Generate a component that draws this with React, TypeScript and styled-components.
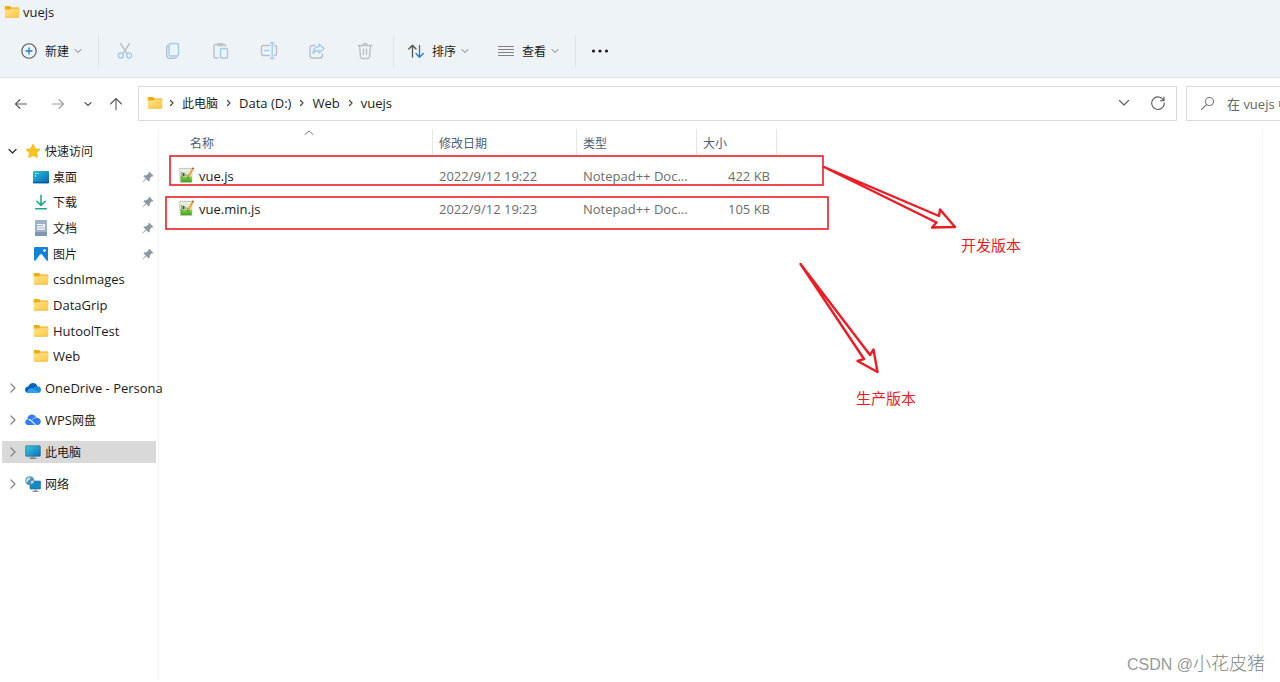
import React from "react";
import styled, { createGlobalStyle, css } from "styled-components";

const GlobalStyle = createGlobalStyle`
  *, *::before, *::after { box-sizing: border-box; }
  body {
    margin: 0;
    background: #fff;
    color: #1b1b1b;
    font-family: "Open Sans", "Noto Sans CJK SC", sans-serif;
    font-size: 13px;
    line-height: 20px;
  }
  button, input { font: inherit; color: inherit; }
  ul, ol { list-style: none; margin: 0; padding: 0; }
  svg { display: block; flex: none; }
`;

const Window = styled.div`
  position: relative;
  display: flex;
  flex-direction: column;
  min-height: 100vh;
  overflow: hidden;
`;

/* Chinese labels are set one pixel smaller than Latin ones. */
const Han = styled.span`
  font-family: "Noto Sans CJK SC", sans-serif;
  font-size: 12px;
`;

const Header = styled.header`
  background: #eef3f8;
  border-bottom: 1px solid #dfe3e6;
`;

const TitleBar = styled.h1`
  display: flex;
  align-items: center;
  gap: 3px;
  height: 24px;
  margin: 0;
  padding-left: 4px;
  font-size: 13px;
  font-weight: 400;
`;

const Toolbar = styled.div`
  display: flex;
  align-items: center;
  height: 53px;
  padding-left: 13px;
`;

const PlainButton = styled.button`
  display: flex;
  align-items: center;
  justify-content: center;
  padding: 0;
  border: 0;
  background: none;
`;

const MenuButton = styled(PlainButton)`
  gap: 8px;
  height: 32px;
  padding: 0 12px 0 8px;

  svg:last-child { margin-left: -3px; }
`;

const ToolButton = styled(PlainButton)`
  width: 48px;
  height: 32px;
`;

const MoreButton = styled(ToolButton)`
  width: 44px;
`;

const Divider = styled.span`
  width: 1px;
  height: 32px;
  margin: 0 2px 0 4px;
  background: #dfe4e9;
`;

const SortGroup = styled.div`
  display: flex;
  gap: 9px;
  padding-left: 4px;
`;

const AddressRow = styled.div`
  display: flex;
  align-items: center;
  padding: 8px 0 8px 8px;
`;

const NavButton = styled(PlainButton)<{ $w: number }>`
  width: ${(p) => p.$w}px;
  height: 32px;
`;

const AddressBox = styled.div`
  display: flex;
  flex: 1;
  align-items: center;
  height: 35px;
  margin-right: 9px;
  padding: 0 0 2px 8px;
  border: 1px solid #d9d9d9;
`;

const Crumbs = styled.ol`
  display: flex;
  flex: 1;
  align-items: center;

  li { display: flex; align-items: center; white-space: nowrap; }
  li svg:last-child { margin: 0 7px 0 8px; }
  li:first-child svg:last-child { margin-left: 6px; }
`;

const Crumb = styled.a`
  color: inherit;
  text-decoration: none;
`;

const SearchBox = styled.label`
  display: flex;
  flex: 0 0 94px;
  align-items: center;
  gap: 12px;
  height: 35px;
  padding-left: 13px;
  border: 1px solid #d9d9d9;
  border-right: 0;
  overflow: hidden;
`;

const SearchInput = styled.input`
  flex: 1;
  min-width: 0;
  padding: 0;
  border: 0;
  outline: 0;
  background: none;

  &::placeholder { color: #666; opacity: 1; }
`;

const Body = styled.div`
  display: flex;
  flex: 1;
  padding-bottom: 2px;
`;

const Sidebar = styled.nav`
  flex: 0 0 159px;
  min-width: 0;
  padding: 11px 2px 0;
  border-right: 1px solid #f3f3f3;
`;

const RootList = styled.ul`
  display: flex;
  flex-direction: column;
  gap: 10px;
`;

const rowLayout = css`
  display: flex;
  align-items: center;
  gap: 4px;
  color: inherit;
  text-decoration: none;
  white-space: nowrap;
`;

const RootLink = styled.a<{ $selected?: boolean }>`
  ${rowLayout}
  height: 22px;
  padding-left: 6px;
  border-radius: 1px;
  background: ${(p) => (p.$selected ? "#d9d9d9" : "none")};

  svg:first-child { margin-right: 4px; }
`;

const ChildList = styled.ul`
  display: grid;
  grid-auto-rows: 1fr;
  height: 205px;
  margin: 2px 0 -2px;
`;

const ChildLink = styled.a`
  ${rowLayout}
  height: 100%;
  padding-left: 31px;
`;

const PinSlot = styled.span`
  margin: 0 2px 0 auto;
`;

const Content = styled.main`
  flex: 1;
  min-width: 0;
  margin-right: 17px;
  border-right: 1px solid #f5f5f5;
`;

const FileTable = styled.table`
  width: 618px;
  table-layout: fixed;
  border-collapse: separate;
  border-spacing: 0;
`;

const HeadCell = styled.th<{ $w: number; $pad: number }>`
  position: relative;
  width: ${(p) => p.$w}px;
  height: 26px;
  padding: 2px 0 0 ${(p) => p.$pad}px;
  border-right: 1px solid #e5e5e5;
  color: #4c607a;
  font-weight: 400;
  text-align: left;
`;

const SortMark = styled.span`
  position: absolute;
  top: 1px;
  left: 50%;
  padding-left: 8px;
`;

const HeadGap = styled.tr`
  height: 5px;
`;

const Cell = styled.td<{ $right?: boolean }>`
  height: 33px;
  padding: 0 7px 2px 6px;
  color: #6d6d6d;
  text-align: ${(p) => (p.$right ? "right" : "left")};
  white-space: nowrap;
`;

const NameCell = styled(Cell)`
  padding-left: 19px;
  color: #1b1b1b;
`;

const FileName = styled.span`
  display: flex;
  align-items: center;
  gap: 4px;
`;

const Marks = styled.svg`
  position: absolute;
  top: 0;
  left: 0;
  pointer-events: none;
`;

const Note = styled.span<{ $x: number; $y: number }>`
  position: absolute;
  left: ${(p) => p.$x}px;
  top: ${(p) => p.$y}px;
  color: #ed1c24;
  font-family: "Noto Sans CJK SC", sans-serif;
  font-size: 15px;
`;

const Watermark = styled.span`
  position: absolute;
  right: 15px;
  bottom: 5px;
  color: #868686;
  font-family: "Noto Sans CJK SC", sans-serif;
  font-weight: 300;
  font-size: 18px;
  line-height: 24px;
`;

const WatermarkSite = styled.span`
  color: #999;
  font-family: "Liberation Sans", sans-serif;
  font-size: 16px;
`;

type LineProps = { d: string; size?: number; w?: number; h?: number; color?: string; sw?: number };

const Line = ({ d, size = 16, w, h, color = "#5c5c5c", sw = 1.1 }: LineProps) => (
  <svg width={w ?? size} height={h ?? size} fill="none" stroke={color} strokeWidth={sw} strokeLinecap="round" strokeLinejoin="round" aria-hidden="true">
    <path d={d} />
  </svg>
);

const ChevronDown = () => <Line w={8} h={6} d="M1 1.500 4 4.500 7 1.500" color="#777" sw={1} />;
const ChevronRight = () => <Line w={6} h={8} d="M1.500 1.500 4 4 1.500 6.500" color="#444" sw={1.2} />;
const TreeClosed = () => <Line w={9} h={12} d="M3 2 7 6 3 10" color="#858585" sw={1.3} />;
const TreeOpen = () => <Line w={9} h={12} d="M1 4.500 4.500 8 8 4.500" color="#333" sw={1.3} />;

const Folder = () => (
  <svg width="16" height="14" viewBox="0 0 16 14" aria-hidden="true">
    <defs>
      <linearGradient id="folder" x1="0" y1="0" x2="1" y2="1">
        <stop offset="0" stopColor="#ffe394" />
        <stop offset="1" stopColor="#fdc73c" />
      </linearGradient>
    </defs>
    <path d="M.8 2q0-1 1-1h3.800q.5 0 .9.4L7.500 2.500H14.500q.7 0 .7.7V6H.8Z" fill="#f2ab0e" />
    <path d="M.8 4.500h4.800q.5 0 .9-.4l.7-.6h7.300q.7 0 .7.7v7.600q0 .8-.8.8H1.600q-.8 0-.8-.8Z" fill="url(#folder)" />
    <path d="M1.300 12.300h13.400" stroke="#e9ad2c" strokeWidth=".6" />
  </svg>
);

const Star = () => (
  <svg width="16" height="16" aria-hidden="true">
    <path d="M8 1.300 10.100 5.700 15 6.400 11.500 9.800 12.300 14.600 8 12.300 3.700 14.600 4.500 9.800 1 6.400 5.900 5.700Z" fill="#fcc419" stroke="#f5b50a" strokeWidth=".8" strokeLinejoin="round" />
  </svg>
);

const Desktop = () => (
  <svg width="16" height="14" aria-hidden="true">
    <defs>
      <linearGradient id="desk" x1="0" y1="0" x2="1" y2="1">
        <stop offset="0" stopColor="#2bc3d2" />
        <stop offset="1" stopColor="#0b62b8" />
      </linearGradient>
    </defs>
    <rect y="1" width="16" height="12.500" rx="1" fill="url(#desk)" />
    <path d="M2 3.500h1.200M2 6h1.200M4.500 3.500h1" stroke="#d9fbff" strokeWidth="1.200" />
    <path d="M0 12.300h16" stroke="#0a5ca8" strokeWidth="1.400" />
  </svg>
);

const Download = () => (
  <svg width="16" height="16" fill="none" stroke="#1aa884" strokeWidth="1.500" strokeLinecap="round" strokeLinejoin="round" aria-hidden="true">
    <path d="M8 1.200v10M3.800 7.200 8 11.400l4.200-4.200M2.700 14.800h10.600" />
  </svg>
);

const Document = () => (
  <svg width="16" height="16" aria-hidden="true">
    <rect x="2" y="0" width="12" height="16" rx="1" fill="#9db2ca" />
    <path d="M2 12h12v3q0 1-1 1H3q-1 0-1-1Z" fill="#7d97b5" />
    <path d="M4 4.500h5M4 6.800h8M4 9.100h8" stroke="#fff" strokeWidth="1.200" />
    <rect x="9.500" y="4" width="2.500" height="2.800" fill="#e9f1f8" />
  </svg>
);

const Picture = () => (
  <svg width="16" height="14" aria-hidden="true">
    <rect x="1" y="0" width="14" height="14" rx="1" fill="#1583d4" />
    <path d="M2 14 7 7.500q1-1 2 0L14 14Z" fill="#f4faff" />
    <circle cx="11.500" cy="3.500" r="1.300" fill="#fff" />
  </svg>
);

const Pin = () => (
  <svg width="12" height="12" aria-hidden="true">
    <path d="M7.300.9 11.100 4.700 10.200 5.500 9.600 5.300 7.700 7.300 7.600 9.400 6.700 10.200 4.300 7.900 1 11.100.8 10.900 3.900 7.500 1.700 5.300 2.600 4.400 4.700 4.300 6.700 2.400 6.500 1.700Z" fill="#8b98a3" stroke="#8b98a3" strokeWidth=".4" />
  </svg>
);

const OneDrive = () => (
  <svg width="16" height="12" aria-hidden="true">
    <path d="M3.400 11Q0 10.700 0 7.700 .2 5 3.200 4.600 4.600 1 8 1q3.200.1 4.400 3.200L9 9Z" fill="#0b63b5" />
    <path d="M12.300 4.200Q15.700 4.300 16 7.500q-.1 3.300-3.400 3.500L7.500 7.200Q9.500 4.200 12.300 4.200Z" fill="#1a86dc" />
    <path d="M2.200 10.500Q3 6.300 6.200 6.200 7.500 6.200 9 7.200l5.400 3.200q-.8.600-1.900.6H4q-1 0-1.800-.5Z" fill="#29a3ee" />
  </svg>
);

const WpsCloud = () => (
  <svg width="16" height="12" aria-hidden="true">
    <path d="M3 11Q.2 10.600.2 8 .3 5.700 2.400 5.200 2.600 1 6.700.5q3.200 0 4.500 2.900Q15.600 4 15.800 7.500q-.1 3.300-3.500 3.500Z" fill="#2f7df6" />
    <path d="M2.400 5.400Q5 4.500 7 6.400L11.600 11H10L5.600 7.300Q4 6 2.400 5.400Z" fill="#cfe4ff" />
    <path d="M7 5.800Q8.600 3.600 11.200 3.400" stroke="#9cc7ff" fill="none" />
  </svg>
);

const Monitor = () => (
  <svg width="16" height="14" aria-hidden="true">
    <defs>
      <linearGradient id="screen" x1="0" y1="0" x2="1" y2="1">
        <stop offset="0" stopColor="#35d0dc" />
        <stop offset="1" stopColor="#0d6dbd" />
      </linearGradient>
    </defs>
    <path d="M6.500 11h3l.5 2H6Z" fill="#9aa7b2" />
    <rect x=".7" y=".8" width="14.600" height="10.400" rx=".6" fill="url(#screen)" stroke="#2b6a8e" strokeWidth=".7" />
    <path d="M4.500 13.300h7" stroke="#66727c" />
  </svg>
);

const Network = () => (
  <svg width="16" height="16" aria-hidden="true">
    <rect x="5" y="5" width="10.600" height="8" rx=".6" fill="#1389c6" stroke="#1d6d98" strokeWidth=".6" />
    <path d="M9.500 13h2v2h-2Z" fill="#9aa7b2" />
    <path d="M7.500 15.300h6" stroke="#66727c" />
    <circle cx="4.800" cy="4.800" r="4.500" fill="#4d93b9" />
    <path d="M2 2.500Q4 .8 5.500 1.500L5 3.500 3 4.500 2.500 6.500.9 5.500ZM6 5l2.500-.5.3 1.500L6.500 8.200Z" fill="#c3dfec" />
  </svg>
);

const NotepadFile = () => (
  <svg width="17" height="17" aria-hidden="true">
    <defs>
      <linearGradient id="page" x1="0" y1="0" x2="0" y2="1">
        <stop offset="0" stopColor="#eef1ee" />
        <stop offset=".5" stopColor="#d3e8bd" />
        <stop offset=".68" stopColor="#6cc63a" />
        <stop offset="1" stopColor="#3f9f18" />
      </linearGradient>
    </defs>
    <path d="M1 1.500h13v14H2.500Z" fill="url(#page)" stroke="#c3c9bf" strokeWidth=".7" />
    <path d="M2 1.300h11" stroke="#b5b5b5" strokeDasharray="1 1" />
    <path d="M3.500 5v5.500h1V5Z" fill="#5e6f62" />
    <path d="M5 6h1.500v3H5ZM7.500 7.500h1v1h-1ZM9.300 8h1v.8h-1Z" fill="#3d4f40" />
    <path d="M14.600 2.200 10 10.300" stroke="#eda42f" strokeWidth="1.800" />
    <path d="M15.400.8 14.500 2.300" stroke="#c44c32" strokeWidth="1.800" />
    <path d="M10.200 10 9.500 11.200" stroke="#5a482e" strokeWidth="1.100" />
  </svg>
);

const GREY = "#b9c0c7";
const BLUE = "#9fcdf0";

const TwoTone = ({ grey, blue }: { grey: string; blue: string }) => (
  <svg width="18" height="18" fill="none" strokeWidth="1.400" strokeLinecap="round" strokeLinejoin="round" aria-hidden="true">
    <path d={grey} stroke={GREY} />
    <path d={blue} stroke={BLUE} />
  </svg>
);

const tools = [
  {
    label: "剪切",
    grey: "M4.500 1.500 11 11.700M13.500 1.500 7 11.700",
    blue: "M7.300 13.500A2.500 2.500 0 1 1 2.300 13.500 2.500 2.500 0 0 1 7.300 13.500ZM15.700 13.500A2.500 2.500 0 1 1 10.700 13.500 2.500 2.500 0 0 1 15.700 13.500Z",
  },
  {
    label: "复制",
    grey: "M3.700 3.500Q2.700 4 2.700 5.500V13q0 3.300 3.300 3.300h4.500Q12 16.300 12.500 15.500",
    blue: "M6.500 1.500h6.500q1.500 0 1.500 1.500v9.500q0 1.500-1.500 1.500H6.500Q5 14 5 12.500V3q0-1.500 1.500-1.500Z",
  },
  {
    label: "粘贴",
    grey: "M5.500 2.500H3.500q-1.500 0-1.500 1.500v10.500q0 1.500 1.500 1.500H6M11 2.500h1Q13.500 2.500 13.500 4M6 1.700h4.500v1.800H6Z",
    blue: "M9.500 6.500h5q1 0 1 1v7.500q0 1-1 1h-5q-1 0-1-1v-7.500q0-1 1-1Z",
  },
  {
    label: "重命名",
    grey: "M9.500 3.500H3.500Q1.500 3.500 1.500 5.500v6q0 2 2 2h6M14.500 3.500Q16.500 3.500 16.500 5.500v6q0 2-2 2",
    blue: "M4.500 8.500H9M10.500 1H14M12.200 1v15.500M10.500 16.500H14",
  },
  {
    label: "共享",
    grey: "M7 3.500H4.500Q2 3.500 2 6v7.500Q2 16 4.500 16h7.500q2.500 0 2.500-2.500V12",
    blue: "M11 2 16 6.500 11 11V8.500Q7 8.300 5 11.500 5.300 5 11 4.500Z",
  },
  {
    label: "删除",
    grey: "M2 3.500h14M3.500 3.500 4.500 15q.1 1.500 1.500 1.500h6q1.400 0 1.500-1.500l1-11.500M7 3.200Q7 1.500 9 1.500t2 1.700M7.500 7v5.500M10.500 7v5.500",
    blue: "",
  },
];

const children = [
  { text: "桌面", han: true, icon: <Desktop />, pin: true },
  { text: "下载", han: true, icon: <Download />, pin: true },
  { text: "文档", han: true, icon: <Document />, pin: true },
  { text: "图片", han: true, icon: <Picture />, pin: true },
  { text: "csdnImages", icon: <Folder /> },
  { text: "DataGrip", icon: <Folder /> },
  { text: "HutoolTest", icon: <Folder /> },
  { text: "Web", icon: <Folder /> },
];

const roots = [
  { label: "OneDrive - Persona", icon: <OneDrive /> },
  { label: <span>WPS<Han>网盘</Han></span>, icon: <WpsCloud /> },
  { label: <Han>此电脑</Han>, icon: <Monitor />, selected: true },
  { label: <Han>网络</Han>, icon: <Network /> },
];

const crumbs = [<Han>此电脑</Han>, "Data (D:)", "Web", "vuejs"];

const columns = [
  { label: "名称", w: 274, pad: 31, sorted: true },
  { label: "修改日期", w: 144, pad: 6 },
  { label: "类型", w: 120, pad: 6 },
  { label: "大小", w: 80, pad: 6 },
];

const files = [
  { name: "vue.js", date: "2022/9/12 19:22", size: "422 KB" },
  { name: "vue.min.js", date: "2022/9/12 19:23", size: "105 KB" },
];

export default function App() {
  return (
    <Window>
      <GlobalStyle />
      <Header>
        <TitleBar>
          <Folder />
          vuejs
        </TitleBar>
        <Toolbar>
          <MenuButton type="button">
            <svg width="16" height="16" fill="none" strokeLinecap="round" aria-hidden="true">
              <circle cx="8" cy="8" r="7.200" stroke="#555" strokeWidth="1.100" />
              <path d="M8 5v6M5 8h6" stroke="#1a7fd0" strokeWidth="1.300" />
            </svg>
            <Han>新建</Han>
            <ChevronDown />
          </MenuButton>
          <Divider />
          {tools.map((t) => (
            <ToolButton key={t.label} type="button" aria-label={t.label}>
              <TwoTone grey={t.grey} blue={t.blue} />
            </ToolButton>
          ))}
          <Divider />
          <SortGroup>
            <MenuButton type="button">
              <svg width="16" height="16" fill="none" strokeWidth="1.300" strokeLinecap="round" strokeLinejoin="round" aria-hidden="true">
                <path d="M4.500 14V2.500M.8 6 4.500 2.200 8 6" stroke="#555" />
                <path d="M11.500 2.500V14M8 10.500l3.500 3.700 3.700-3.700" stroke="#1a7fd0" />
              </svg>
              <Han>排序</Han>
              <ChevronDown />
            </MenuButton>
            <MenuButton type="button">
              <Line d="M.5 3.500h15M.5 6.500h15M.5 9.500h15M.5 12.500h15" color="#808080" />
              <Han>查看</Han>
              <ChevronDown />
            </MenuButton>
          </SortGroup>
          <Divider />
          <MoreButton type="button" aria-label="更多">
            <svg width="18" height="4" fill="#1b1b1b" aria-hidden="true">
              <circle cx="2.500" cy="2" r="1.600" />
              <circle cx="9" cy="2" r="1.600" />
              <circle cx="15.500" cy="2" r="1.600" />
            </svg>
          </MoreButton>
        </Toolbar>
      </Header>

      <AddressRow>
        <NavButton type="button" $w={26} aria-label="后退">
          <Line d="M13.500 8h-11M7 3.500 2.500 8 7 12.500" />
        </NavButton>
        <NavButton type="button" $w={48} aria-label="前进">
          <Line d="M2.500 8h11M9 3.500 13.500 8 9 12.500" color="#a0a0a0" />
        </NavButton>
        <NavButton type="button" $w={12} aria-label="最近的位置">
          <Line w={8} h={6} d="M1 1.500 4 4.500 7 1.500" />
        </NavButton>
        <NavButton type="button" $w={44} aria-label="向上">
          <Line d="M8 14V2.500M2.500 8 8 2.500 13.500 8" />
        </NavButton>
        <AddressBox>
          <Crumbs>
            <li>
              <Folder />
              <ChevronRight />
            </li>
            {crumbs.map((c, i) => (
              <li key={i}>
                <Crumb href="#">{c}</Crumb>
                {i < crumbs.length - 1 && <ChevronRight />}
              </li>
            ))}
          </Crumbs>
          <NavButton type="button" $w={32} aria-label="展开地址">
            <Line w={12} h={8} d="M1.500 1.500 6 6 10.500 1.500" />
          </NavButton>
          <NavButton type="button" $w={36} aria-label="刷新">
            <Line d="M13.700 5.500A6.300 6.300 0 1 0 14.300 8M14 2v3.700h-3.700" />
          </NavButton>
        </AddressBox>
        <SearchBox>
          <Line w={15} h={16} d="M13.500 5.500A4 4 0 1 1 5.500 5.500 4 4 0 0 1 13.500 5.500ZM6.700 8.400 1.500 13.500" color="#777" />
          <SearchInput type="text" aria-label="搜索" placeholder="在 vuejs 中搜索" />
        </SearchBox>
      </AddressRow>

      <Body>
        <Sidebar>
          <RootList>
            <li>
              <RootLink href="#">
                <TreeOpen />
                <Star />
                <Han>快速访问</Han>
              </RootLink>
              <ChildList>
                {children.map((c) => (
                  <li key={c.text}>
                    <ChildLink href="#">
                      {c.icon}
                      {c.han ? <Han>{c.text}</Han> : c.text}
                      {c.pin && <PinSlot><Pin /></PinSlot>}
                    </ChildLink>
                  </li>
                ))}
              </ChildList>
            </li>
            {roots.map((r, i) => (
              <li key={i}>
                <RootLink href="#" $selected={r.selected}>
                  <TreeClosed />
                  {r.icon}
                  {r.label}
                </RootLink>
              </li>
            ))}
          </RootList>
        </Sidebar>

        <Content>
          <FileTable>
            <thead>
              <tr>
                {columns.map((c) => (
                  <HeadCell key={c.label} $w={c.w} $pad={c.pad} scope="col">
                    <Han>{c.label}</Han>
                    {c.sorted && (
                      <SortMark>
                        <Line w={10} h={6} d="M1 4.500 5 1 9 4.500" color="#777" sw={1} />
                      </SortMark>
                    )}
                  </HeadCell>
                ))}
              </tr>
            </thead>
            <tbody>
              <HeadGap aria-hidden="true" />
              {files.map((f) => (
                <tr key={f.name}>
                  <NameCell>
                    <FileName>
                      <NotepadFile />
                      {f.name}
                    </FileName>
                  </NameCell>
                  <Cell>{f.date}</Cell>
                  <Cell>Notepad++ Doc...</Cell>
                  <Cell $right>{f.size}</Cell>
                </tr>
              ))}
            </tbody>
          </FileTable>
        </Content>
      </Body>

      <Marks width="1040" height="400" fill="none" stroke="#ed1c24" strokeWidth="2" aria-hidden="true">
        <rect x="170" y="156" width="653" height="29" strokeWidth="1.600" />
        <rect x="166" y="197" width="662" height="32" strokeWidth="1.600" />
        <path d="M824 167 939 216 940 209.500 955 227 932 227.500 936.500 222.500Z" strokeWidth="2.400" strokeLinejoin="round" />
        <path d="M800.500 264 870 355 873.500 349.500 877.500 372 857.500 361 864 359Z" strokeWidth="2.400" strokeLinejoin="round" />
      </Marks>
      <Note $x={961} $y={235}>开发版本</Note>
      <Note $x={856} $y={388}>生产版本</Note>
      <Watermark>
        <WatermarkSite>CSDN @</WatermarkSite>小花皮猪
      </Watermark>
    </Window>
  );
}
